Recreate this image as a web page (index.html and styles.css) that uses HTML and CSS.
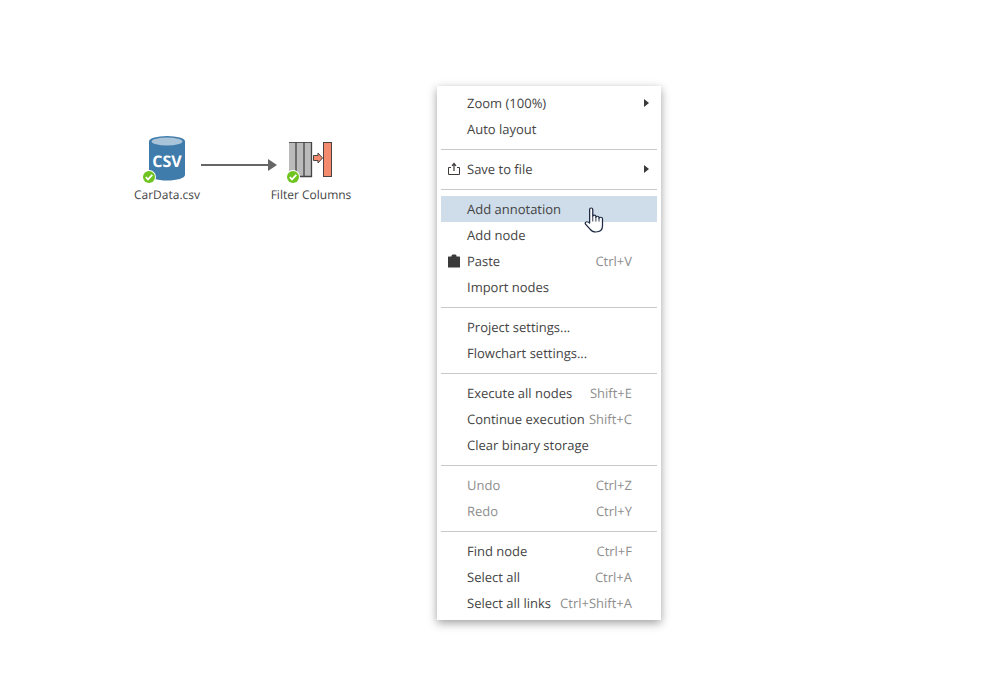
FILE: index.html
```html
<!DOCTYPE html>
<html lang="en">
<head>
<meta charset="utf-8">
<title>Workflow</title>
<link rel="stylesheet" href="styles.css">
</head>
<body>
<main class="canvas">
  <div class="node node-csv">
    <svg class="node-icon" width="60" height="52" viewBox="0 0 60 52">
      <path d="M12 6.500 V40 C12 43 20 45.500 30 45.500 C40 45.500 48 43 48 40 V6.500 Z" fill="#3f7cab"/>
      <ellipse cx="30" cy="6.500" rx="18" ry="5.500" fill="#3f7cab"/>
      <ellipse cx="30" cy="6.500" rx="15.500" ry="4" fill="#a9c4d9"/>
      <text class="csv-text" x="30" y="32" text-anchor="middle">CSV</text>
      <circle cx="12" cy="42" r="7" fill="#fff"/>
      <circle cx="12" cy="42" r="6" fill="#6fc41f"/>
      <path d="M8.800 42.200 L11 44.400 L15.300 39.800" fill="none" stroke="#fff" stroke-width="1.800"/>
    </svg>
    <span class="node-label">CarData.csv</span>
  </div>

  <svg class="link" width="80" height="14" viewBox="0 0 80 14">
    <path d="M0 7 H67" stroke="#666" stroke-width="2"/>
    <path d="M67 1 L76 7 L67 13 Z" fill="#666"/>
  </svg>

  <div class="node node-filter">
    <svg class="node-icon" width="60" height="52" viewBox="2 0 60 52">
      <rect x="10" y="7" width="23" height="35" fill="#bbb"/>
      <path d="M10 7.500 H33" stroke="#555" stroke-width="1"/>
      <path d="M17 7 V42 M25 7 V42 M32.500 7 V42 M14 41.500 H33" stroke="#444" stroke-width="1.300" fill="none"/>
      <rect x="44.500" y="7.500" width="8" height="34" fill="#f58b6e" stroke="#4a4340" stroke-width="1"/>
      <path d="M34.500 20.500 H39 V18 L43.500 23 L39 28 V25.500 H34.500 Z" fill="#f58b6e" stroke="#4a4340" stroke-width="1"/>
      <circle cx="14" cy="42" r="7" fill="#fff"/>
      <circle cx="14" cy="42" r="6" fill="#6fc41f"/>
      <path d="M10.800 42.200 L13 44.400 L17.300 39.800" fill="none" stroke="#fff" stroke-width="1.800"/>
    </svg>
    <span class="node-label">Filter Columns</span>
  </div>

  <nav class="menu">
    <div class="item"><span class="name">Zoom (100%)</span><span class="caret"></span></div>
    <div class="item"><span class="name">Auto layout</span></div>
    <hr class="sep">
    <div class="item">
      <svg class="item-icon" width="14" height="14" viewBox="0 0 14 14">
        <path d="M4 5.500 H1.500 V12.500 H12.500 V5.500 H10" fill="none" stroke="#3e3a39" stroke-width="1"/>
        <path d="M7 9 V2 M5 3.800 L7 1.500 L9 3.800" fill="none" stroke="#3e3a39" stroke-width="1.200"/>
      </svg>
      <span class="name">Save to file</span><span class="caret"></span>
    </div>
    <hr class="sep">
    <div class="item active"><span class="name">Add annotation</span></div>
    <div class="item"><span class="name">Add node</span></div>
    <div class="item">
      <svg class="item-icon" width="14" height="14" viewBox="0 0 14 14">
        <path d="M1.500 2.500 H4.500 V1.500 L5.500 0.500 H8.500 L9.500 1.500 V2.500 H12.500 Q13 2.500 13 3 V13 Q13 13.500 12.500 13.500 H1.500 Q1 13.500 1 13 V3 Q1 2.500 1.500 2.500 Z" fill="#3a3a3a"/>
      </svg>
      <span class="name">Paste</span><span class="key">Ctrl+V</span>
    </div>
    <div class="item"><span class="name">Import nodes</span></div>
    <hr class="sep">
    <div class="item"><span class="name">Project settings...</span></div>
    <div class="item"><span class="name">Flowchart settings...</span></div>
    <hr class="sep">
    <div class="item"><span class="name">Execute all nodes</span><span class="key">Shift+E</span></div>
    <div class="item"><span class="name">Continue execution</span><span class="key">Shift+C</span></div>
    <div class="item"><span class="name">Clear binary storage</span></div>
    <hr class="sep">
    <div class="item disabled"><span class="name">Undo</span><span class="key">Ctrl+Z</span></div>
    <div class="item disabled"><span class="name">Redo</span><span class="key">Ctrl+Y</span></div>
    <hr class="sep">
    <div class="item"><span class="name">Find node</span><span class="key">Ctrl+F</span></div>
    <div class="item"><span class="name">Select all</span><span class="key">Ctrl+A</span></div>
    <div class="item"><span class="name">Select all links</span><span class="key">Ctrl+Shift+A</span></div>
  </nav>

  <svg class="cursor" width="20" height="26" viewBox="0 0 16 25" preserveAspectRatio="none">
    <path d="M4.500 14.500 V2.500 Q4.500 1 5.700 1 Q7 1 7 2.500 V9 Q7 7.800 8.300 7.800 Q9.500 7.800 9.500 9 V10 Q9.500 8.800 10.800 8.800 Q12 8.800 12 10 V11 Q12 9.800 13.300 9.800 Q14.800 9.800 14.800 11.200 V18 Q14.800 24 9.500 24 Q6.500 24 5 21.500 L1.200 16.500 Q0.500 15 1.800 14.300 Q3 13.800 4.500 15.500 Z" fill="#fff" stroke="#1f2a44" stroke-width="1" stroke-linejoin="round"/>
    <path d="M7 9 V14 M9.500 10 V14 M12 11 V14" fill="none" stroke="#1f2a44" stroke-width="0.800"/>
  </svg>
</main>
</body>
</html>
```

FILE: styles.css
```css
html, body {
  margin: 0;
  padding: 0;
  background: #fff;
}

.canvas {
  position: relative;
  width: 998px;
  height: 689px;
  overflow: hidden;
  font-family: "Open Sans", "Liberation Sans", sans-serif;
  color: #444;
  text-rendering: geometricPrecision;
}

.node {
  position: absolute;
  top: 135px;
  display: flex;
  flex-direction: column;
  align-items: center;
  width: 120px;
}

.node-csv { left: 107px; }
.node-filter { left: 251px; }

.node-icon {
  display: block;
}

.node-label {
  margin-top: -1px;
  font-size: 12px;
  line-height: 18px;
  white-space: nowrap;
}

.csv-text {
  font-family: "Open Sans", "Liberation Sans", sans-serif;
  font-size: 16px;
  font-weight: 700;
  fill: #fff;
}

.link {
  position: absolute;
  left: 201px;
  top: 158px;
}

.menu {
  position: absolute;
  left: 437px;
  top: 86px;
  width: 224px;
  box-sizing: border-box;
  padding: 4px;
  background: #fff;
  box-shadow: 0 3px 9px rgba(0, 0, 0, 0.38);
  font-size: 13px;
}

.item {
  position: relative;
  display: flex;
  align-items: center;
  justify-content: space-between;
  height: 26px;
  padding: 0 25px 0 26px;
  line-height: 26px;
  white-space: nowrap;
}

.active {
  background: #cfdce9;
}

.disabled {
  color: #8e8e8e;
}

.key {
  color: #8e8e8e;
}

.caret {
  position: absolute;
  right: 8px;
  top: 9px;
  width: 0;
  height: 0;
  border-left: 5px solid #3a3a3a;
  border-top: 4px solid transparent;
  border-bottom: 4px solid transparent;
}

.item-icon {
  position: absolute;
  left: 6px;
  top: 6px;
}

.sep {
  height: 1px;
  margin: 7px 0 6px;
  border: 0;
  background: #c8c8c8;
}

.cursor {
  position: absolute;
  left: 584px;
  top: 207px;
}
```
